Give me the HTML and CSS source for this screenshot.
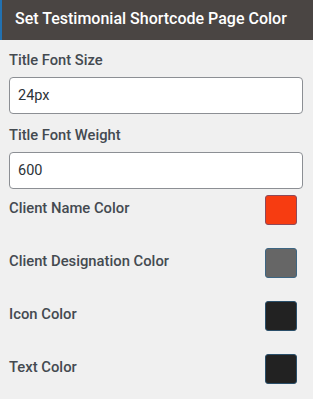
FILE: index.html
```html
<!DOCTYPE html>
<html lang="en">
<head>
    <meta charset="UTF-8">
    <title>Testimonial Shortcode Page Color</title>
    <link rel="stylesheet" href="styles.css">
</head>
<body>

    <div class="panel-title">Set Testimonial Shortcode Page Color</div>

    <div class="panel-body">
        <div class="field">
            <label for="titleSize">Title Font Size</label>
            <input type="text" id="titleSize" value="24px">
        </div>

        <div class="field">
            <label for="titleWeight">Title Font Weight</label>
            <input type="text" id="titleWeight" value="600">
        </div>

        <div class="color-list">
            <div class="color-row">
                <span class="color-label">Client Name Color</span>
                <span class="swatch swatch-red"></span>
            </div>

            <div class="color-row">
                <span class="color-label">Client Designation Color</span>
                <span class="swatch swatch-grey"></span>
            </div>

            <div class="color-row">
                <span class="color-label">Icon Color</span>
                <span class="swatch swatch-dark"></span>
            </div>

            <div class="color-row">
                <span class="color-label">Text Color</span>
                <span class="swatch swatch-dark"></span>
            </div>
        </div>
    </div>

</body>
</html>
```

FILE: styles.css
```css
body {
    margin: 0;
    font-family: Roboto, 'Liberation Sans', sans-serif;
    background-color: #f0f0f0;
    color: #444a50;
}

.panel-title {
    height: 40px;
    box-sizing: border-box;
    padding: 0 0 0 13px;
    background-color: #4a4543;
    border-left: 2px solid #2271b1;
    color: #ffffff;
    font-size: 16px;
    font-weight: 500;
    line-height: 38px;
}

.panel-body {
    padding: 10px 10px 0 9px;
}

.field label {
    display: block;
    font-size: 14.7px;
    font-weight: 500;
    line-height: 20px;
}

.field input {
    display: block;
    width: 100%;
    height: 37px;
    box-sizing: border-box;
    margin: 7px 0 11px;
    padding: 0 8px;
    border: 1px solid #8c8f94;
    border-radius: 4px;
    background-color: #ffffff;
    font-family: Roboto, 'Liberation Sans', sans-serif;
    font-size: 14.5px;
    color: #2c3338;
}

.color-list {
    display: flex;
    flex-direction: column;
    gap: 23px;
    margin-top: -5px;
    padding-right: 6px;
}

.color-row {
    display: flex;
    align-items: center;
    justify-content: space-between;
    height: 30px;
}

.color-label {
    font-size: 14.8px;
    font-weight: 500;
    margin-top: -5px;
}

.swatch {
    width: 32px;
    height: 30px;
    box-sizing: border-box;
    border-radius: 3px;
    border: 1px solid #2c4a60;
}

.swatch-red {
    background-color: #f73c11;
    border-color: #8e4a5a;
}

.swatch-grey {
    background-color: #666666;
    border-color: #3d6683;
}

.swatch-dark {
    background-color: #222222;
    border-color: #2a4f6a;
}
```
